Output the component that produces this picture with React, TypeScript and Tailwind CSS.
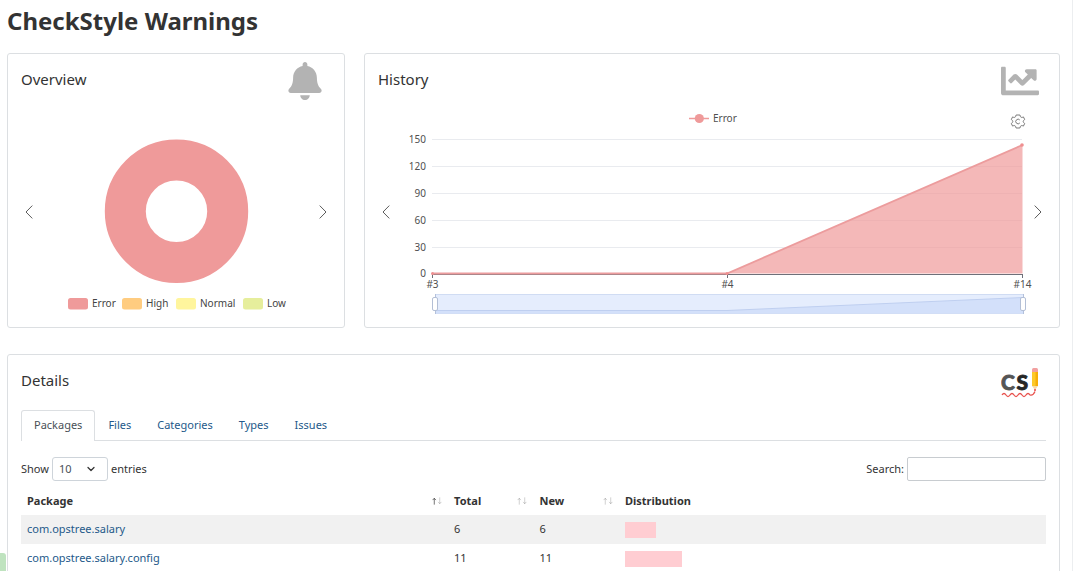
import type { ReactNode } from 'react';
import { FaBell, FaChartLine } from 'react-icons/fa';
import { ChevronDown } from 'lucide-react';

const severities = [
  { name: 'Error', color: '#ef9a9a', x: 68 },
  { name: 'High', color: '#ffcc80', x: 122 },
  { name: 'Normal', color: '#fff59d', x: 176 },
  { name: 'Low', color: '#e6ee9c', x: 243 },
];

const ticks = [
  { label: '150', y: 139.5 },
  { label: '120', y: 166.5 },
  { label: '90', y: 193.5 },
  { label: '60', y: 220.5 },
  { label: '30', y: 247.5 },
];

const builds = [
  { label: '#3', x: 432.5 },
  { label: '#4', x: 727.5 },
  { label: '#14', x: 1022.5 },
];

const tabs = ['Packages', 'Files', 'Categories', 'Types', 'Issues'];

const rows = [
  { name: 'com.opstree.salary', total: 6, fresh: 6, share: 7.5 },
  { name: 'com.opstree.salary.config', total: 11, fresh: 11, share: 13.7 },
];

function Card({ title, icon, children }: { title: string; icon: ReactNode; children: ReactNode }) {
  return (
    <section className="rounded-[3px] border border-[#dcdfe2] bg-white px-[13px] pt-2 pb-[13px]">
      <header className="flex h-10 items-start justify-between pr-[7px]">
        <h2 className="pt-[5px] text-[15px] leading-6">{title}</h2>
        {icon}
      </header>
      {children}
    </section>
  );
}

function Arrow({ direction }: { direction: 'left' | 'right' }) {
  return (
    <button
      type="button"
      aria-label={direction === 'left' ? 'Previous' : 'Next'}
      className="flex w-4 shrink-0 justify-center pt-2"
    >
      <svg width="8" height="14" viewBox="0 0 8 14" fill="none" stroke="#5c5c5c">
        <path d={direction === 'left' ? 'M7.3 .6 1 7l6.3 6.4' : 'M.7 .6 7 7 .7 13.4'} />
      </svg>
    </button>
  );
}

function Donut() {
  return (
    <svg viewBox="37 102 278 212" className="min-w-0 flex-1 text-[10px]" fill="#444">
      <circle cx="176.5" cy="211.3" r="51.2" fill="none" stroke="#ef9a9a" strokeWidth="41" />
      {severities.map((s) => (
        <g key={s.name}>
          <rect x={s.x} y="298" width="20" height="11.5" rx="2.5" fill={s.color} />
          <text x={s.x + 24} y="307">
            {s.name}
          </text>
        </g>
      ))}
    </svg>
  );
}

function Trend() {
  return (
    <svg viewBox="394 102 636 212" className="min-w-0 flex-1 overflow-visible text-[10px]" fill="#505050">
      <path d="M689 118.5h20" stroke="#ef9a9a" strokeWidth="1.5" />
      <circle cx="699.3" cy="118.5" r="4.6" fill="#ef9a9a" />
      <text x="713" y="122">
        Error
      </text>
      <g transform="translate(1018 121.5)" fill="none" stroke="#7a7a7a" strokeLinejoin="round">
        <path d="M-1.9 -6.5H1.9Q2.2 -4.4 3.2 -4.2Q4.200 -3.800 5.400 -4.600L6.700 -2Q5.200 -1 5.200 0T6.700 2L5.400 4.600Q4.200 3.800 3.200 4.200Q2.200 4.400 1.900 6.500H-1.900Q-2.200 4.400 -3.200 4.200Q-4.200 3.800 -5.400 4.600L-6.700 2Q-5.200 1 -5.200 0T-6.700 -2L-5.400 -4.600Q-4.200 -3.800 -3.200 -4.200Q-2.200 -4.400 -1.900 -6.500Z" />
        <path d="M1.8 -1.5A2.3 2.3 0 1 0 1.8 1.5" />
      </g>
      {ticks.map((t) => (
        <g key={t.label}>
          <path d={`M432 ${t.y}h590`} stroke="#e9ebef" />
          <text x="426" y={t.y + 3.5} textAnchor="end">
            {t.label}
          </text>
        </g>
      ))}
      <text x="426" y="277" textAnchor="end">
        0
      </text>
      <path d="M432 274.5h591" stroke="#6e7079" />
      <path d="M727 273.5 1022.5 145V273.5Z" fill="#ef9a9a" fillOpacity="0.7" />
      <path d="M432 273.5H727L1022.5 145" fill="none" stroke="#ec9c9d" strokeWidth="1.8" />
      {builds.map((b) => (
        <g key={b.label}>
          <path d={`M${b.x} 274v4`} stroke="#6e7079" />
          <text x={b.x} y="287.5" textAnchor="middle">
            {b.label}
          </text>
        </g>
      ))}
      <circle cx="432.5" cy="273.5" r="1.5" fill="#ef8f90" />
      <circle cx="727" cy="273.5" r="1.5" fill="#ef8f90" />
      <circle cx="1022" cy="145" r="1.8" fill="#ef8f90" />
      <rect x="435.5" y="294.5" width="588" height="19" fill="#e5edfd" stroke="#d0dcf3" />
      <path d="M436 310.5H727L1023 297.5V313.5H436Z" fill="#d3e0fa" />
      <path d="M436 310.5H727L1023 297.5" fill="none" stroke="#bfcff0" />
      <path d="M435.5 294V314M1023.5 294V314" stroke="#b3c0da" />
      <rect x="432.5" y="297.5" width="5" height="13" rx="1.5" fill="#fff" stroke="#b3bfd6" />
      <rect x="1020.5" y="297.5" width="5" height="13" rx="1.5" fill="#fff" stroke="#b3bfd6" />
    </svg>
  );
}

function CheckStyleLogo() {
  return (
    <svg width="38" height="38" viewBox="0 0 38 38" aria-label="CheckStyle">
      <g fontFamily="Lato" fontSize="21" fontWeight="900" strokeWidth="0.8">
        <text x="0" y="26.5" fill="#555" stroke="#555">
          C
        </text>
        <text x="15.5" y="26.5" fill="#262626" stroke="#262626">
          S
        </text>
      </g>
      <path d="M31 6.5q0-1.500 1.500-1.500h3q1.500 0 1.500 1.500V9h-6z" fill="#f2a0a0" />
      <path d="M31 9h6v14h-6z" fill="#fdc92a" />
      <path d="M34.5 9H37v14h-2.500z" fill="#f7ae08" />
      <path d="M31 23h6l-3 4z" fill="#f7d9a8" />
      <circle cx="34" cy="27" r="1" fill="#e8433f" />
      <path
        d="M1 32q2-3 4 0t4 0 4 0 4 0 4 0 4 0 4 0q3 1 5-3.500"
        fill="none"
        stroke="#e8534f"
        strokeWidth="1.3"
      />
    </svg>
  );
}

function SortMark({ ascending = false }: { ascending?: boolean }) {
  return (
    <svg width="10" height="8" viewBox="0 0 11 8" fill="none" stroke="#333" aria-hidden="true">
      <path d="M2.5 8V1M.7 3 2.5 1l1.8 2" strokeOpacity={ascending ? 0.75 : 0.25} />
      <path d="M8.5 0v7M6.7 5l1.8 2 1.8-2" strokeOpacity="0.25" />
    </svg>
  );
}

function Heading({ label, width, sort }: { label: string; width: string; sort?: 'asc' | 'none' }) {
  return (
    <th scope="col" className={`${width} px-[6px] font-bold`}>
      <div className="flex items-center justify-between">
        <span>{label}</span>
        {sort && <SortMark ascending={sort === 'asc'} />}
      </div>
    </th>
  );
}

export default function App() {
  return (
    <div className="relative h-screen overflow-hidden border-r border-[#eceef0] bg-white pr-3 pl-[7px] font-['Noto_Sans',sans-serif] text-[11px] text-[#333]">
      <h1 className="pt-[5px] pb-4 text-[24px] leading-8 font-bold">CheckStyle Warnings</h1>

      <div className="grid grid-cols-[338fr_696fr] gap-[19px]">
        <Card title="Overview" icon={<FaBell className="h-[38px] w-[38px] text-[#b3b3b3]" />}>
          <div className="flex items-center">
            <Arrow direction="left" />
            <Donut />
            <Arrow direction="right" />
          </div>
        </Card>
        <Card title="History" icon={<FaChartLine className="h-[38px] w-[38px] text-[#b3b3b3]" />}>
          <div className="flex items-center">
            <Arrow direction="left" />
            <Trend />
            <Arrow direction="right" />
          </div>
        </Card>
      </div>

      <div className="pt-[26px]">
        <Card title="Details" icon={<CheckStyleLogo />}>
          <nav className="mt-[7px] flex border-b border-[#dcdfe2]">
            {tabs.map((tab, i) => (
              <a
                key={tab}
                href={`#${tab.toLowerCase()}`}
                className={
                  i === 0
                    ? '-mb-px rounded-t-[3px] border border-b-0 border-[#dcdfe2] bg-white px-3 pt-1 pb-[6px] leading-5 text-[#495057]'
                    : 'border border-b-0 border-transparent px-3 pt-1 pb-[5px] leading-5 text-[#24598a]'
                }
              >
                {tab}
              </a>
            ))}
          </nav>

          <div className="mt-4 flex items-center justify-between">
            <label className="flex items-center gap-[3px]">
              Show
              <span className="relative">
                <select
                  defaultValue="10"
                  className="block h-6 w-14 appearance-none rounded-[3px] border border-[#ced4da] bg-white pl-[6px] text-[#495057]"
                >
                  <option>10</option>
                  <option>25</option>
                  <option>50</option>
                  <option>100</option>
                </select>
                <ChevronDown
                  size={12}
                  strokeWidth={2.5}
                  className="pointer-events-none absolute top-[6px] right-[11px]"
                />
              </span>
              entries
            </label>
            <label className="flex items-center gap-[3px]">
              Search:
              <input type="search" className="h-6 w-[139px] rounded-[2px] border border-[#c8ccd0] px-2" />
            </label>
          </div>

          <table className="mt-[6px] w-full table-fixed text-left">
            <thead>
              <tr className="h-7">
                <Heading label="Package" width="w-5/12" sort="asc" />
                <Heading label="Total" width="w-1/12" sort="none" />
                <Heading label="New" width="w-1/12" sort="none" />
                <Heading label="Distribution" width="w-5/12" />
              </tr>
            </thead>
            <tbody>
              {rows.map((row) => (
                <tr key={row.name} className="h-[29px] odd:bg-[#f1f1f1]">
                  <td className="px-[6px]">
                    <a href={`#${row.name}`} className="text-[#24598a]">
                      {row.name}
                    </a>
                  </td>
                  <td className="px-[6px]">{row.total}</td>
                  <td className="px-[6px]">{row.fresh}</td>
                  <td className="px-[6px]">
                    <div className="h-4 bg-[#ffcdd2]" style={{ width: `${row.share}%` }} />
                  </td>
                </tr>
              ))}
            </tbody>
          </table>
        </Card>
      </div>

      <div className="absolute bottom-0 left-0 h-[18px] w-[6px] rounded-tr-[3px] bg-[#bfe3bf]" />
    </div>
  );
}
